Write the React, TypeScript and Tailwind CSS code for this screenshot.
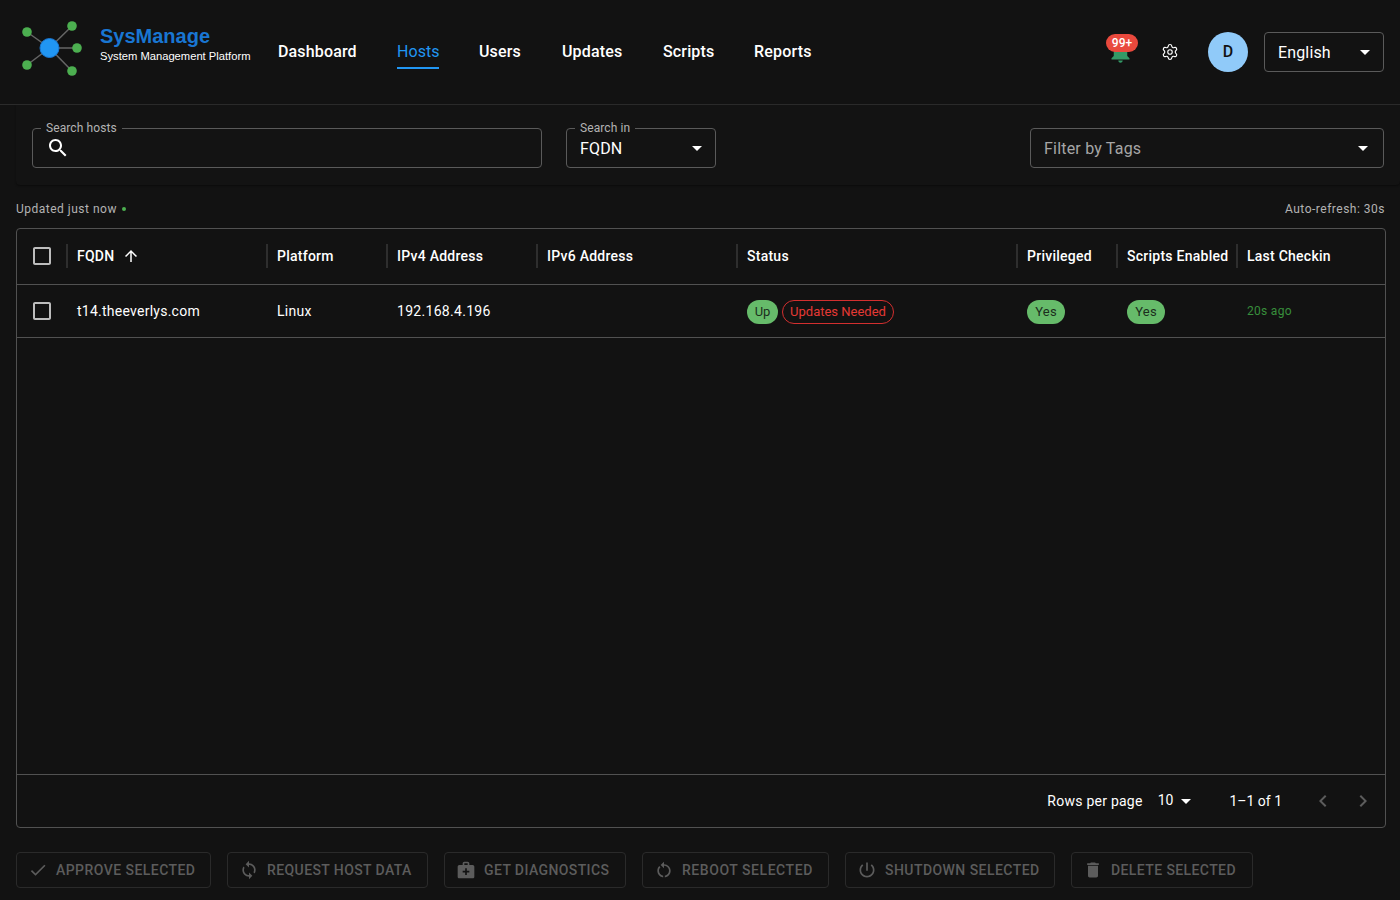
import type { ReactNode } from "react";
import { Settings } from "lucide-react";

const roboto = "font-['Roboto',sans-serif]";

const icons = {
  search:
    "M15.5 14h-.79l-.28-.27C15.41 12.59 16 11.11 16 9.5 16 5.91 13.09 3 9.5 3S3 5.91 3 9.5 5.91 16 9.5 16c1.61 0 3.09-.59 4.23-1.57l.27.28v.79l5 4.99L20.49 19l-4.99-5zm-6 0C7.01 14 5 11.99 5 9.5S7.01 5 9.5 5 14 7.01 14 9.5 11.99 14 9.5 14z",
  arrowUp: "M4 12l1.41 1.41L11 7.83V20h2V7.83l5.58 5.59L20 12l-8-8-8 8z",
  check: "M9 16.17L4.83 12l-1.42 1.41L9 19 21 7l-1.41-1.41z",
  sync: "M12 4V1L8 5l4 4V6c3.31 0 6 2.69 6 6 0 1.01-.25 1.97-.7 2.8l1.46 1.46C19.54 15.03 20 13.57 20 12c0-4.42-3.58-8-8-8zm0 14c-3.31 0-6-2.69-6-6 0-1.01.25-1.97.7-2.8L5.24 7.74C4.46 8.97 4 10.43 4 12c0 4.42 3.58 8 8 8v3l4-4-4-4v3z",
  medical:
    "M20 6h-4V4c0-1.1-.9-2-2-2h-4c-1.1 0-2 .9-2 2v2H4c-1.1 0-2 .9-2 2v12c0 1.1.9 2 2 2h16c1.1 0 2-.9 2-2V8c0-1.1-.9-2-2-2zM10 4h4v2h-4V4zm6 11h-3v3h-2v-3H8v-2h3v-3h2v3h3v2z",
  restart:
    "M12 5V2L8 6l4 4V7c3.31 0 6 2.69 6 6 0 2.97-2.17 5.43-5 5.91v2.02c3.95-.49 7-3.85 7-7.93 0-4.42-3.58-8-8-8zm-6 8c0-1.65.67-3.15 1.76-4.24L6.34 7.34C4.9 8.79 4 10.79 4 13c0 4.08 3.05 7.44 7 7.93v-2.02c-2.83-.48-5-2.94-5-5.91z",
  power:
    "M13 3h-2v10h2V3zm4.83 2.17l-1.42 1.42C17.99 7.86 19 9.81 19 12c0 3.87-3.13 7-7 7s-7-3.13-7-7c0-2.19 1.01-4.14 2.58-5.42L6.17 5.17C4.23 6.82 3 9.26 3 12c0 4.97 4.03 9 9 9s9-4.03 9-9c0-2.74-1.23-5.18-3.17-6.83z",
  trash: "M6 19c0 1.1.9 2 2 2h8c1.1 0 2-.9 2-2V7H6v12zM19 4h-3.5l-1-1h-5l-1 1H5v2h14V4z",
  box: "M19 5v14H5V5h14m0-2H5c-1.1 0-2 .9-2 2v14c0 1.1.9 2 2 2h14c1.1 0 2-.9 2-2V5c0-1.1-.9-2-2-2z",
  drop: "M7 10l5 5 5-5z",
  left: "M15.41 16.59L10.83 12l4.58-4.59L14 6l-6 6 6 6 1.41-1.41z",
  right: "M8.59 16.59L13.17 12 8.59 7.41 10 6l6 6-6 6-1.41-1.41z",
  bell: "M12 22c1.1 0 2-.9 2-2h-4c0 1.1.89 2 2 2zm6-6v-5c0-3.07-1.64-5.64-4.5-6.32V4c0-.83-.67-1.5-1.5-1.5s-1.5.67-1.5 1.5v.68C7.63 5.36 6 7.92 6 11v5l-2 2v1h16v-1l-2-2z",
};

function Icon({ d, className }: { d: string; className?: string }) {
  return (
    <svg viewBox="0 0 24 24" fill="currentColor" className={className}>
      <path d={d} />
    </svg>
  );
}

function Logo() {
  return (
    <svg viewBox="0 0 60 56" className="w-[60px] h-[56px] shrink-0 mb-[8px]">
      <g stroke="#666666" strokeWidth="1.5">
        <line x1="27.5" y1="28" x2="5" y2="12" />
        <line x1="27.5" y1="28" x2="50" y2="6" />
        <line x1="27.5" y1="28" x2="55" y2="28" />
        <line x1="27.5" y1="28" x2="5" y2="45" />
        <line x1="27.5" y1="28" x2="50" y2="51" />
      </g>
      <circle cx="27.5" cy="28" r="9.5" fill="#2196f3" stroke="#1976d2" strokeWidth="1" />
      <circle cx="5" cy="12" r="4.8" fill="#4caf50" />
      <circle cx="50" cy="6" r="4.8" fill="#4caf50" />
      <circle cx="55" cy="28" r="4.8" fill="#4caf50" />
      <circle cx="5" cy="45" r="4.8" fill="#4caf50" />
      <circle cx="50" cy="51" r="4.8" fill="#4caf50" />
    </svg>
  );
}

function Outlined({
  label,
  className,
  children,
}: {
  label?: string;
  className: string;
  children: ReactNode;
}) {
  return (
    <div className={`relative h-10 flex items-center rounded border border-[#5a5a5a] ${className}`}>
      {label && (
        <span className="absolute -top-[8px] left-[8px] bg-[#131313] px-[5px] text-xs leading-[14px] tracking-[0.1px] text-[#b3b3b3]">
          {label}
        </span>
      )}
      {children}
    </div>
  );
}

const columns = "grid grid-cols-[50px_200px_120px_150px_200px_280px_100px_120px_1fr]";

function HeaderCell({ children }: { children: ReactNode }) {
  return (
    <div className="flex items-center h-[24px] ml-[-1px] border-l-2 border-[#2e2e2e] pl-[9px] text-sm font-medium tracking-[0.25px] text-white whitespace-nowrap">
      {children}
    </div>
  );
}

function Chip({ className, children }: { className: string; children: ReactNode }) {
  return (
    <span className={`inline-flex items-center justify-center h-6 mt-[2px] pt-px rounded-full bg-[#66bb6a] text-[13px] text-[#1c2e1d] ${className}`}>
      {children}
    </span>
  );
}

function ActionButton({ d, label, className }: { d: string; label: string; className: string }) {
  return (
    <button className={`flex items-center h-9 pl-[11px] rounded border border-[#2a2a2a] text-sm font-medium text-[#5c5c5c] whitespace-nowrap ${className}`}>
      <Icon d={d} className="w-5 h-5 mr-2" />
      {label}
    </button>
  );
}

export default function App() {
  return (
    <div className={`h-[900px] overflow-hidden flex flex-col bg-[#121212] text-white ${roboto}`}>
      <header className="h-[105px] shrink-0 flex items-center border-b border-[#2b2b2b] pl-[22px] pr-[16px]">
        <Logo />
        <div className="ml-[18px] mb-[18px] w-[178px] font-['Liberation_Sans',sans-serif]">
          <div className="text-[20px] leading-[24px] font-bold text-[#1976d2]">SysManage</div>
          <div className="text-[11.2px] leading-[14px] mt-[1px] text-white">System Management Platform</div>
        </div>
        <nav className="flex gap-[40px] h-full items-center text-base tracking-[0.15px]">
          <a className="w-[79px] font-medium text-white">Dashboard</a>
          <a className="relative w-[42px] tracking-[0.05px] text-[#2196f3]">
            Hosts
            <span className="absolute left-0 right-0 -bottom-[5px] h-[2px] bg-[#2196f3]" />
          </a>
          <a className="w-[43px] font-medium text-white">Users</a>
          <a className="w-[61px] font-medium text-white">Updates</a>
          <a className="w-[51px] font-medium text-white">Scripts</a>
          <a className="font-medium tracking-[0.2px] text-white">Reports</a>
        </nav>
        <div className="ml-auto flex items-center">
          <div className="relative w-6 h-6 mr-[29px]">
            <Icon d={icons.bell} className="w-[27px] h-[27px] -ml-[1.5px] -mt-[2.5px] text-[#339966]" />
            <span className="absolute -top-[6px] left-[-2px] h-[18px] min-w-[32px] px-[5px] flex items-center justify-center rounded-full bg-[#e9493d] text-xs font-medium leading-none text-white">
              99+
            </span>
          </div>
          <Settings strokeWidth={1.5} className="w-[18px] h-[18px] text-white mr-[29px]" />
          <div className="w-10 h-10 mr-[16px] rounded-full bg-[#90caf9] flex items-center justify-center text-base font-medium text-[#121212]">
            D
          </div>
          <Outlined className="w-[120px] pl-[13px]">
            <span className="text-base tracking-[0.15px] pt-px">English</span>
            <Icon d={icons.drop} className="absolute right-[6px] w-6 h-6 text-white" />
          </Outlined>
        </div>
      </header>

      <section className="ml-[16px] h-[80px] shrink-0 flex items-start pt-[23px] pl-[16px] pr-[16px] bg-[#131313] rounded-b shadow-[0_1px_2px_rgba(0,0,0,0.4)]">
        <Outlined label="Search hosts" className="w-[510px] pl-[13px]">
          <Icon d={icons.search} className="w-6 h-6 text-white" />
        </Outlined>
        <Outlined label="Search in" className="w-[150px] ml-[24px] pl-[13px]">
          <span className="text-base tracking-[0.15px] pt-px">FQDN</span>
          <Icon d={icons.drop} className="absolute right-[6px] w-6 h-6 text-white" />
        </Outlined>
        <Outlined className="w-[354px] ml-auto pl-[13px]">
          <span className="text-base tracking-[0.2px] pt-px text-[#a6a6a6]">Filter by Tags</span>
          <Icon d={icons.drop} className="absolute right-[8px] w-6 h-6 text-white" />
        </Outlined>
      </section>

      <div className="h-[43px] shrink-0 pl-[16px] pr-[15px] flex items-center justify-between pt-[4px] text-xs tracking-[0.5px] text-[#b3b3b3]">
        <div className="flex items-center">
          Updated just now
          <span className="ml-[5px] mt-[1px] w-[4px] h-[4px] rounded-full bg-[#4caf50]" />
        </div>
        <div>Auto-refresh: 30s</div>
      </div>

      <main className="ml-[16px] w-[1370px] h-[600px] shrink-0 flex flex-col rounded border border-[#515151]">
        <div className={`${columns} h-[56px] shrink-0 items-center pb-[2px] border-b border-[#515151]`}>
          <div className="flex justify-center">
            <Icon d={icons.box} className="w-6 h-6 text-[#bdbdbd]" />
          </div>
          <HeaderCell>
            FQDN
            <Icon d={icons.arrowUp} className="w-[18px] h-[18px] ml-[8px]" />
          </HeaderCell>
          <HeaderCell>Platform</HeaderCell>
          <HeaderCell>IPv4 Address</HeaderCell>
          <HeaderCell>IPv6 Address</HeaderCell>
          <HeaderCell>Status</HeaderCell>
          <HeaderCell>Privileged</HeaderCell>
          <HeaderCell>Scripts Enabled</HeaderCell>
          <HeaderCell>Last Checkin</HeaderCell>
        </div>
        <div className={`${columns} h-[53px] shrink-0 items-center border-b border-[#515151] text-sm`}>
          <div className="flex justify-center">
            <Icon d={icons.box} className="w-6 h-6 text-[#bdbdbd]" />
          </div>
          <div className="pl-[10px] tracking-[0.25px]">t14.theeverlys.com</div>
          <div className="pl-[10px] tracking-[0.3px]">Linux</div>
          <div className="pl-[10px] tracking-[0.3px]">192.168.4.196</div>
          <div />
          <div className="pl-[10px] flex items-center gap-[4px]">
            <Chip className="w-[31px]">Up</Chip>
            <span className="inline-flex items-center justify-center w-[112px] h-6 mt-[2px] pt-px rounded-full border border-[#d32f2f] text-[13px] text-[#e53935]">
              Updates Needed
            </span>
          </div>
          <div className="pl-[10px] flex">
            <Chip className="w-[38px] tracking-[0.2px]">Yes</Chip>
          </div>
          <div className="pl-[10px] flex">
            <Chip className="w-[38px] tracking-[0.2px]">Yes</Chip>
          </div>
          <div className="pl-[10px] text-xs tracking-[0.3px] text-[#388e3c]">20s ago</div>
        </div>
        <div className="flex-1" />
        <div className="h-[53px] shrink-0 flex items-center justify-end border-t border-[#515151] text-sm text-white">
          <span className="tracking-[0.25px]">Rows per page</span>
          <span className="ml-[15px] mr-[1px] mt-[-2px]">10</span>
          <Icon d={icons.drop} className="w-6 h-6" />
          <span className="ml-[31px]">1–1 of 1</span>
          <Icon d={icons.left} className="w-6 h-6 ml-[29px] text-[#5c5c5c]" />
          <Icon d={icons.right} className="w-6 h-6 ml-[16px] mr-[10px] text-[#5c5c5c]" />
        </div>
      </main>

      <footer className="mt-[24px] px-[16px] flex gap-[16px]">
        <ActionButton d={icons.check} label="APPROVE SELECTED" className="w-[195px] tracking-[0.45px]" />
        <ActionButton d={icons.sync} label="REQUEST HOST DATA" className="w-[201px] tracking-[0.4px]" />
        <ActionButton d={icons.medical} label="GET DIAGNOSTICS" className="w-[182px] tracking-[0.4px]" />
        <ActionButton d={icons.restart} label="REBOOT SELECTED" className="w-[187px] tracking-[0.55px]" />
        <ActionButton d={icons.power} label="SHUTDOWN SELECTED" className="w-[210px] tracking-[0.45px]" />
        <ActionButton d={icons.trash} label="DELETE SELECTED" className="w-[182px] tracking-[0.4px]" />
      </footer>
    </div>
  );
}
